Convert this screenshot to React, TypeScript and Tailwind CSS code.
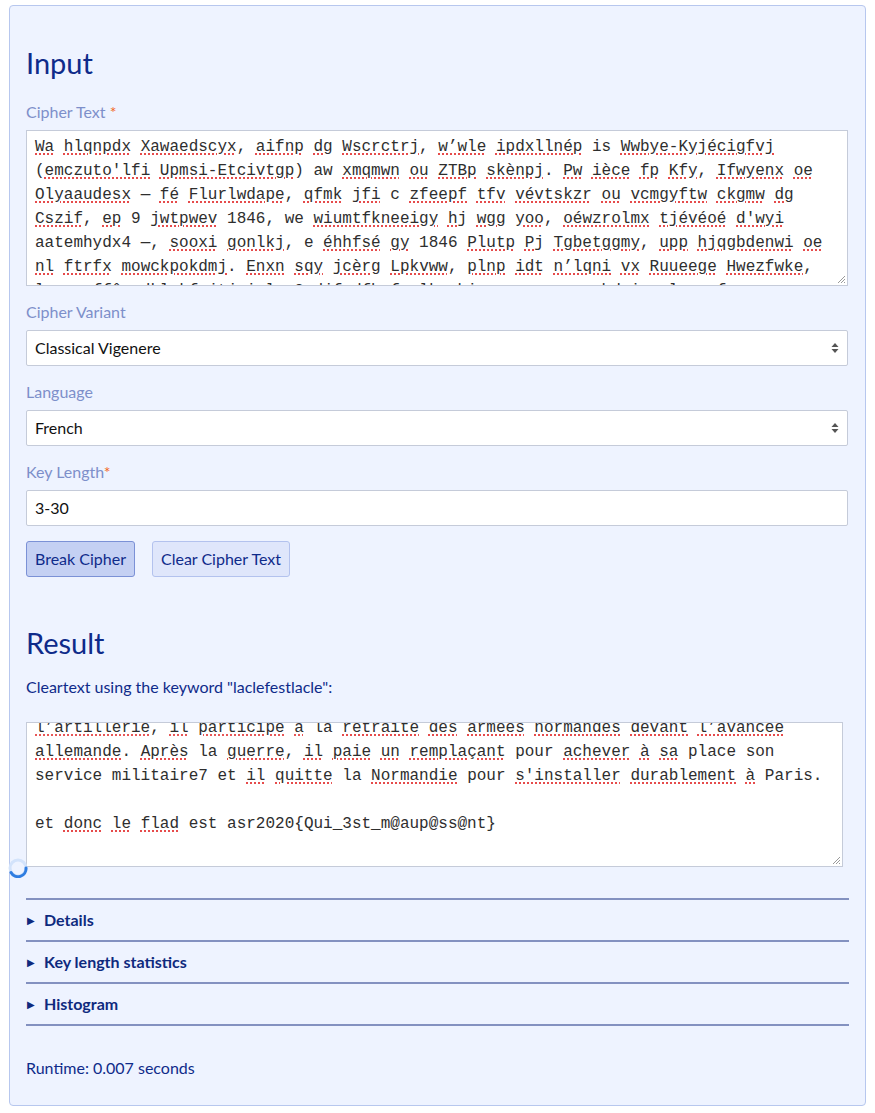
import React from 'react'

const cipherLines = [
  '^Wa ^hlqnpdx ^Xawaedscyx, ^aifnp ^dg ^Wscrctrj, ^w’wle ^ipdxllnép is ^Wwbye-Kyjécigfvj',
  '(^emczuto\'lfi ^Upmsi-Etcivtgp) aw ^xmqmwn ^ou ^ZTBp ^skènpj. ^Pw ^ièce ^fp ^Kfy, ^Ifwyenx ^oe',
  '^Olyaaudesx — ^fé ^Flurlwdape, ^qfmk ^jfi c ^zfeepf ^tfv ^vévtskzr ^ou ^vcmgyftw ^ckgmw ^dg',
  '^Cszif, ^ep 9 ^jwtpwev 1846, we ^wiumtfkneeigy ^hj ^wgg ^yoo, ^oéwzrolmx ^tjévéoé ^d\'wyi',
  'aatemhydx4 —, ^sooxi ^gonlkj, e ^éhhfsé ^gy 1846 ^Plutp ^Pj ^Tgbetggmy, ^upp ^hjqgbdenwi ^oe',
  '^nl ^ftrfx ^mowckpokdmj. ^Enxn ^sqy ^jcèrg ^Lpkvww, ^plnp ^idt ^n’lqni ^vx ^Ruueege ^Hwezfwke,',
  '^lmqoe ^ffêa ^dklvkfsjtj ^ivlx ^Gcdjf ^dfbsfa ^lkyxhi ^oq ^wsvomzm ^cbdqiv ^nluae ^fv',
]

const resultLines = [
  '^l’artillerie, ^il ^participe ^à la ^retraite ^des ^armées ^normandes ^devant ^l’avancée',
  '^allemande. ^Après la ^guerre, ^il ^paie ^un ^remplaçant pour ^achever ^à ^sa place son',
  'service militaire7 et ^il ^quitte la ^Normandie pour ^s\'installer ^durablement ^à Paris.',
  '',
  'et ^donc ^le ^flad est asr2020{Qui_3st_m@aup@ss@nt}',
]

function Line({ text }: { text: string }) {
  if (!text) return <div className="h-6">&nbsp;</div>
  const tokens = text.split(' ')
  return (
    <div className="h-6 whitespace-pre">
      {tokens.map((tok, i) => {
        const sep = i < tokens.length - 1 ? ' ' : ''
        if (!tok.includes('^')) return <span key={i}>{tok + sep}</span>
        const m = tok.match(/^(.*?)\^(.*?)([,.)]*)$/)
        const pre = m ? m[1] : ''
        const word = m ? m[2] : tok
        const post = m ? m[3] : ''
        return (
          <span key={i}>
            {pre}
            <span className="underline decoration-dotted decoration-[#e02020] underline-offset-[3px]">{word}</span>
            {post + sep}
          </span>
        )
      })}
    </div>
  )
}

function Grip() {
  return (
    <svg className="absolute right-[1px] bottom-[1px]" width="10" height="10" viewBox="0 0 10 10">
      <line x1="9" y1="2" x2="2" y2="9" stroke="#9a9a9a" strokeWidth="1" />
      <line x1="9" y1="5" x2="5" y2="9" stroke="#9a9a9a" strokeWidth="1" />
      <line x1="9" y1="8" x2="8" y2="9" stroke="#9a9a9a" strokeWidth="1" />
    </svg>
  )
}

function SelectArrows() {
  return (
    <svg width="8" height="12" viewBox="0 0 8 12" className="mr-[8px]">
      <path d="M4 1 L7.5 5 L0.5 5 Z" fill="#555" />
      <path d="M4 11 L7.5 7 L0.5 7 Z" fill="#555" />
    </svg>
  )
}

function Label({ text, star, gap }: { text: string; star?: boolean; gap?: boolean }) {
  return (
    <div className="h-6 leading-6 text-[#7d8fca] text-base mb-[6px]">
      {text}
      {star && <span className="text-[#f26a1b]">{gap ? ' *' : '*'}</span>}
    </div>
  )
}

function Summary({ text }: { text: string }) {
  return (
    <div className="border-t-2 border-[#8391c0] h-[42px] flex items-center">
      <span className="text-[10px] text-[#0e2a7e] ml-[1px] w-[17px]">▶</span>
      <span className="font-bold text-[#0e2a7e] text-base">{text}</span>
    </div>
  )
}

export default function App() {
  return (
    <div className="pt-[5px] pl-[9px] pb-[7px] bg-white" style={{ fontFamily: 'Lato, "Noto Sans", sans-serif' }}>
      <div className="relative w-[857px] h-[1101px] bg-[#eef3ff] border border-[#b7c7ee] rounded-[4px] px-4">
        {/* Input */}
        <h2 className="text-[29px] text-[#0f2b8a] leading-[36px] mt-[39px] mb-[19px]">Input</h2>

        <Label text="Cipher Text" star gap />
        <div className="relative h-[156px] w-[822px] bg-white border border-[#c5cbd9] overflow-hidden px-2 pt-[4px]">
          <div className="text-base text-[#2e2e2e] leading-6" style={{ fontFamily: '"Liberation Mono", monospace' }}>
            {cipherLines.map((l, i) => (
              <Line key={i} text={l} />
            ))}
          </div>
          <Grip />
        </div>

        <div className="mt-[14px]">
          <Label text="Cipher Variant" />
          <div className="h-[36px] w-[822px] bg-white border border-[#c5cbd9] rounded-[2px] flex items-center justify-between pl-2 text-base text-[#111]">
            <span>Classical Vigenere</span>
            <SelectArrows />
          </div>
        </div>

        <div className="mt-[14px]">
          <Label text="Language" />
          <div className="h-[36px] w-[822px] bg-white border border-[#c5cbd9] rounded-[2px] flex items-center justify-between pl-2 text-base text-[#111]">
            <span>French</span>
            <SelectArrows />
          </div>
        </div>

        <div className="mt-[14px]">
          <Label text="Key Length" star />
          <div className="h-[36px] w-[822px] bg-white border border-[#c5cbd9] rounded-[2px] flex items-center pl-2 text-base text-[#111]">
            3-30
          </div>
        </div>

        <div className="flex gap-[17px] mt-[15px]">
          <button className="h-[36px] px-[8px] bg-[#c4d0f3] border border-[#7b91d6] rounded-[3px] text-base text-[#0f2b8a]">
            Break Cipher
          </button>
          <button className="h-[36px] px-[8px] bg-[#dfe6fb] border border-[#b3c2ee] rounded-[3px] text-base text-[#0f2b8a]">
            Clear Cipher Text
          </button>
        </div>

        {/* Result */}
        <h2 className="text-[29px] text-[#0f2b8a] leading-[36px] mt-[48px] mb-[14px]">Result</h2>
        <div className="text-base leading-6 text-[#0f2b8a]">Cleartext using the keyword "laclefestlacle":</div>

        <div className="relative h-[145px] w-[817px] bg-white border border-[#c5cbd9] overflow-hidden px-2 mt-[23px]">
          <div className="text-base text-[#2e2e2e] leading-6 mt-[-7px]" style={{ fontFamily: '"Liberation Mono", monospace' }}>
            {resultLines.map((l, i) => (
              <Line key={i} text={l} />
            ))}
          </div>
          <Grip />
        </div>

        <div className="mt-[31px] border-b-2 border-[#8391c0]">
          <Summary text="Details" />
          <Summary text="Key length statistics" />
          <Summary text="Histogram" />
        </div>

        <div className="mt-[30px] text-base leading-6 text-[#0f2b8a]">Runtime: 0.007 seconds</div>

        {/* loading spinner */}
        <svg className="absolute left-[-2px] top-[852px]" width="20" height="20" viewBox="0 0 20 20">
          <circle cx="10" cy="10" r="8" fill="none" stroke="#d3e3fb" strokeWidth="3" />
          <path d="M18 10 A8 8 0 0 1 3 14.5" fill="none" stroke="#2f7de1" strokeWidth="3" strokeLinecap="round" />
        </svg>
      </div>
    </div>
  )
}
